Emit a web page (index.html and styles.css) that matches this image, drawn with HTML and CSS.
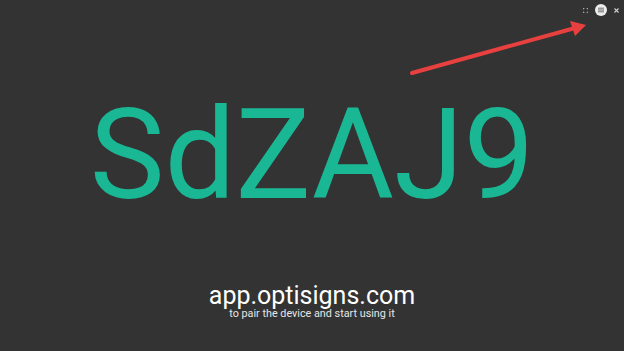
FILE: index.html
```html
<!DOCTYPE html>
<html lang="en">
<head>
<meta charset="utf-8">
<title>OptiSigns pairing</title>
<link rel="stylesheet" href="styles.css">
</head>
<body>
<main class="screen">
  <header class="toolbar">
    <span class="icon icon-full" aria-label="fullscreen">
      <svg width="5" height="5" viewBox="0 0 5 5"><path d="M0 1.5V0H1.5M3.5 0H5V1.5M5 3.5V5H3.5M1.5 5H0V3.5" fill="none" stroke="#cfcfcf" stroke-width="1"/></svg>
    </span>
    <span class="icon icon-menu" aria-label="menu">
      <svg width="12" height="12" viewBox="0 0 12 12"><circle cx="6" cy="6" r="6" fill="#ececec"/><rect x="3" y="3.6" width="6" height="4.8" fill="#8a8a8a"/><path d="M3 5.2H9M3 6.8H9" stroke="#dcdcdc" stroke-width="0.6"/></svg>
    </span>
    <span class="icon icon-close" aria-label="close">
      <svg width="5" height="5" viewBox="0 0 5 5"><path d="M0.5 0.5L4.5 4.5M4.5 0.5L0.5 4.5" stroke="#cfcfcf" stroke-width="1.1"/></svg>
    </span>
  </header>
  <div class="code">SdZAJ9</div>
  <footer class="footer">
    <div class="url">app.optisigns.com</div>
    <div class="hint">to pair the device and start using it</div>
  </footer>
  <svg class="arrow" width="624" height="351" viewBox="0 0 624 351" aria-hidden="true">
    <line x1="412" y1="73" x2="575" y2="28" stroke="#e8403f" stroke-width="4" stroke-linecap="round"/>
    <polygon points="586,25 575,36 570,21" fill="#e8403f"/>
  </svg>
</main>
</body>
</html>
```
FILE: styles.css
```css
html, body {
  margin: 0;
  padding: 0;
  background: #333333;
}
.screen {
  position: relative;
  width: 624px;
  height: 351px;
  overflow: hidden;
  background: #333333;
  font-family: Roboto, "Liberation Sans", sans-serif;
  display: flex;
  flex-direction: column;
  align-items: center;
}
.toolbar {
  align-self: stretch;
  height: 20px;
  display: flex;
  justify-content: flex-end;
  align-items: center;
  gap: 7px;
  padding-right: 5px;
}
.icon {
  display: flex;
  align-items: center;
  justify-content: center;
}
.code {
  margin-top: 72px;
  font-size: 126px;
  line-height: 126px;
  color: #1ab795;
  font-weight: 400;
}
.footer {
  margin-top: 66px;
  display: flex;
  flex-direction: column;
  align-items: center;
}
.url {
  font-size: 25px;
  line-height: 24px;
  color: #ffffff;
}
.hint {
  font-size: 10.8px;
  line-height: 11px;
  color: #e6e6e6;
}
.arrow {
  position: absolute;
  left: 0;
  top: 0;
  pointer-events: none;
}
```
